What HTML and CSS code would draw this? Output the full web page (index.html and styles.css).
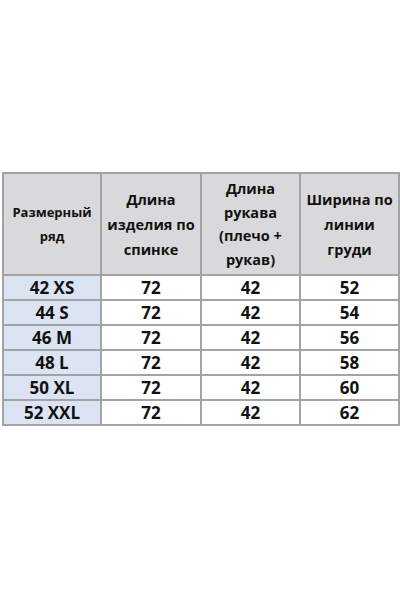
FILE: index.html
```html
<!DOCTYPE html>
<html lang="ru">
<head>
<meta charset="utf-8">
<link rel="stylesheet" href="styles.css">
</head>
<body>
<div class="page">
<table class="sizes">
  <colgroup>
    <col class="c1"><col class="c2"><col class="c3"><col class="c4">
  </colgroup>
  <thead>
    <tr>
      <th class="h-small">Размерный<br>ряд</th>
      <th>Длина<br>изделия по<br>спинке</th>
      <th class="h-tight">Длина<br>рукава<br>(плечо +<br>рукав)</th>
      <th>Ширина по<br>линии<br>груди</th>
    </tr>
  </thead>
  <tbody>
    <tr><td class="size">42 XS</td><td>72</td><td>42</td><td>52</td></tr>
    <tr><td class="size">44 S</td><td>72</td><td>42</td><td>54</td></tr>
    <tr><td class="size">46 M</td><td>72</td><td>42</td><td>56</td></tr>
    <tr><td class="size">48 L</td><td>72</td><td>42</td><td>58</td></tr>
    <tr><td class="size">50 XL</td><td>72</td><td>42</td><td>60</td></tr>
    <tr><td class="size">52 XXL</td><td>72</td><td>42</td><td>62</td></tr>
  </tbody>
</table>
</div>
</body>
</html>
```
FILE: styles.css
```css
html, body {
  margin: 0;
  padding: 0;
  background: #ffffff;
}
.page {
  width: 400px;
  height: 600px;
  padding: 172px 0 0 2px;
  box-sizing: border-box;
}
.sizes {
  border-collapse: collapse;
  table-layout: fixed;
  width: 396px;
  font-family: "Open Sans", "Liberation Sans", sans-serif;
  font-weight: 700;
  color: #111111;
}
.c1 { width: 98px; }
.c2 { width: 100px; }
.c3 { width: 99px; }
.c4 { width: 99px; }
.sizes th, .sizes td {
  border: 2px solid #a3a3a3;
  text-align: center;
  padding: 0;
}
.sizes th {
  background: #d9d9db;
  height: 100px;
  font-size: 14.5px;
  line-height: 25px;
  font-weight: 700;
}
.sizes th.h-small {
  font-size: 13px;
  line-height: 24px;
}
.sizes th.h-tight {
  line-height: 23.5px;
}
.sizes td {
  height: 23px;
  font-size: 17px;
  line-height: 23px;
  background: #ffffff;
}
.sizes td.size {
  background: #dce3f3;
}
```
